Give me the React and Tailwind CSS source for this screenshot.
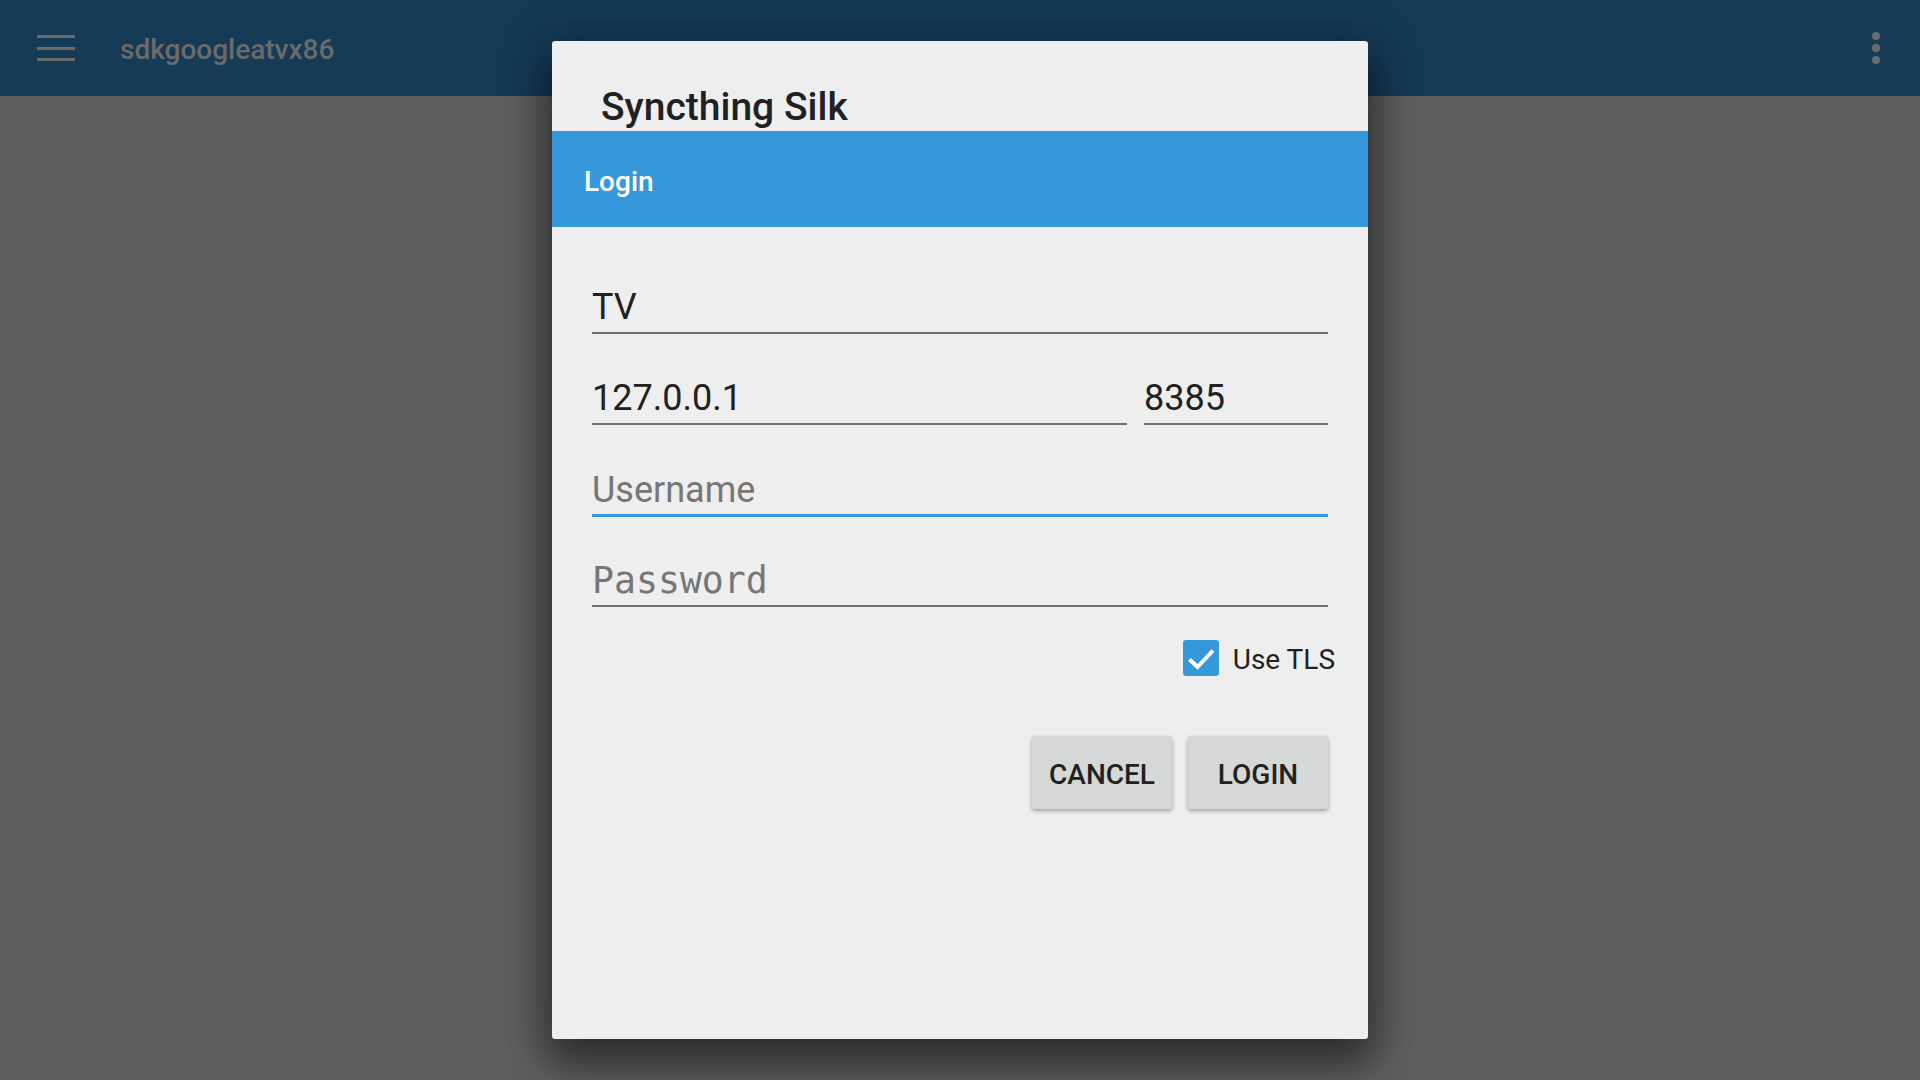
import { useState } from 'react';

const Field = ({ value, placeholder, mono, focused, className = '' }) => (
  <input
    defaultValue={value}
    placeholder={placeholder}
    type={mono ? 'password' : 'text'}
    className={`block w-full h-[46px] pb-[6px] leading-[40px] bg-transparent outline-none text-[#212121] placeholder:text-[#767676] ${
      mono ? "font-['DejaVu_Sans_Mono',monospace] text-[36.5px]" : 'text-[36px]'
    } ${focused ? 'border-b-[3px] border-[#3797db]' : 'border-b-2 border-[#6f6f6f]'} ${className}`}
  />
);

const App = () => {
  const [tls, setTls] = useState(true);

  return (
    <div className="relative w-[1920px] h-[1080px] overflow-hidden bg-[#5f5f5f] font-['Roboto',sans-serif]">
      {/* app bar behind the dimmed overlay */}
      <div className="h-[96px] bg-[#163b57] flex items-center">
        <div className="ml-[37px] w-[38px] flex flex-col gap-[8.5px]">
          <span className="block h-[3px] bg-[#6b6b6b]" />
          <span className="block h-[3px] bg-[#6b6b6b]" />
          <span className="block h-[3px] bg-[#6b6b6b]" />
        </div>
        <div className="ml-[45px] mt-[3px] text-[28px] leading-[33px] font-medium text-[#6b6b6b]">sdkgoogleatvx86</div>
        <div className="ml-auto mr-[40px] flex flex-col gap-[4px]">
          <span className="block w-[8px] h-[8px] rounded-full bg-[#6b6b6b]" />
          <span className="block w-[8px] h-[8px] rounded-full bg-[#6b6b6b]" />
          <span className="block w-[8px] h-[8px] rounded-full bg-[#6b6b6b]" />
        </div>
      </div>

      {/* dialog */}
      <div className="absolute left-[552px] top-[41px] w-[816px] h-[998px] bg-[#eeeeee] rounded-[3px] shadow-[0_24px_38px_3px_rgba(0,0,0,0.35),0_9px_46px_8px_rgba(0,0,0,0.3)]">
        <div className="h-[90px] pt-[43px] pl-[49px] text-[39px] leading-[46px] font-medium text-[#212121]">Syncthing Silk</div>

        <div className="h-[96px] bg-[#3797db] pt-[34px] pl-[32px] text-[28px] leading-[33px] font-medium text-white">Login</div>

        <div className="px-[40px] pt-[16px]">
          <div className="h-[91px] flex flex-col justify-end">
            <Field value="TV" />
          </div>
          <div className="h-[91px] flex items-end gap-[17px]">
            <Field value="127.0.0.1" className="flex-1" />
            <Field value="8385" className="!w-[184px] shrink-0" />
          </div>
          <div className="h-[92px] flex flex-col justify-end">
            <Field placeholder="Username" focused />
          </div>
          <div className="h-[90px] flex flex-col justify-end">
            <Field placeholder="Password" mono />
          </div>

          <div className="mt-[33px] -mr-[7px] flex justify-end items-center">
            <button
              onClick={() => setTls(!tls)}
              className={`w-[36px] h-[36px] rounded-[3px] flex items-center justify-center ${tls ? 'bg-[#3797db]' : 'border-2 border-[#6f6f6f]'}`}
            >
              {tls && (
                <svg viewBox="0 0 36 36" className="w-[36px] h-[36px]">
                  <polyline points="6.5,19.5 14.5,27 30,10.5" fill="none" stroke="#ffffff" strokeWidth="4" />
                </svg>
              )}
            </button>
            <span className="ml-[14px] mt-[2px] text-[28px] leading-[33px] text-[#212121]">Use TLS</span>
          </div>

          <div className="mt-[60px] flex justify-end gap-[16px]">
            <button className="w-[140px] h-[73px] pt-[5px] rounded-[3px] bg-[#d6d7d7] shadow-[0_2px_4px_rgba(0,0,0,0.35)] text-[28px] font-medium text-[#212121]">CANCEL</button>
            <button className="w-[140px] h-[73px] pt-[5px] rounded-[3px] bg-[#d6d7d7] shadow-[0_2px_4px_rgba(0,0,0,0.35)] text-[28px] font-medium text-[#212121]">LOGIN</button>
          </div>
        </div>
      </div>
    </div>
  );
};

export default App;
